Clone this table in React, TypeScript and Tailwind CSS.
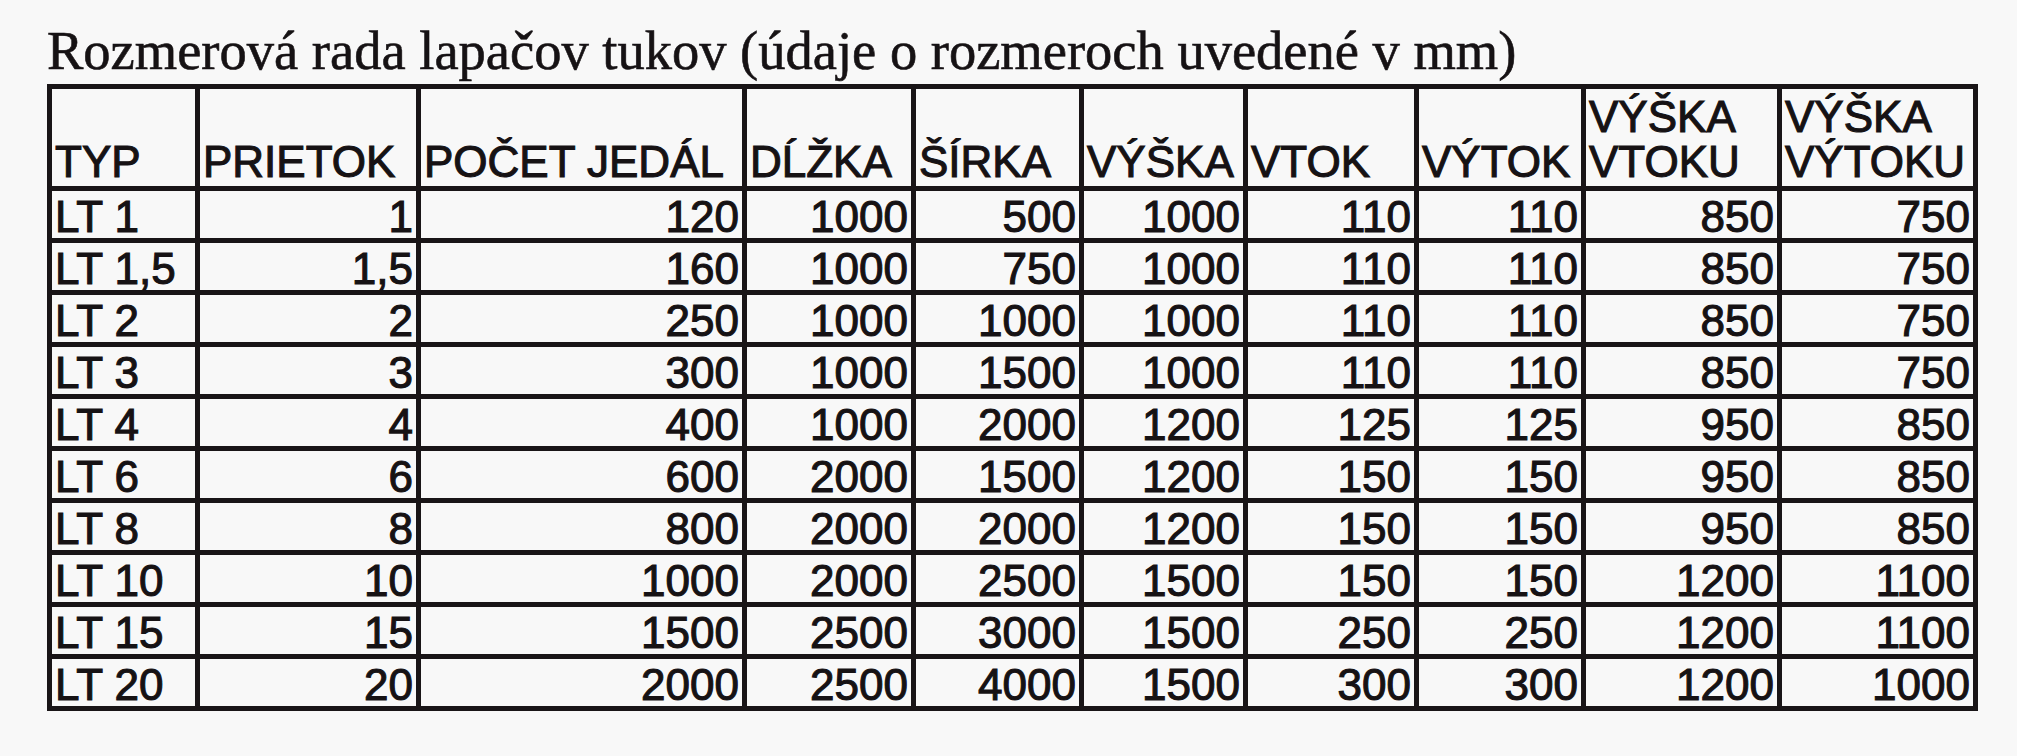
const rows: string[][] = [
  ["LT 1", "1", "120", "1000", "500", "1000", "110", "110", "850", "750"],
  ["LT 1,5", "1,5", "160", "1000", "750", "1000", "110", "110", "850", "750"],
  ["LT 2", "2", "250", "1000", "1000", "1000", "110", "110", "850", "750"],
  ["LT 3", "3", "300", "1000", "1500", "1000", "110", "110", "850", "750"],
  ["LT 4", "4", "400", "1000", "2000", "1200", "125", "125", "950", "850"],
  ["LT 6", "6", "600", "2000", "1500", "1200", "150", "150", "950", "850"],
  ["LT 8", "8", "800", "2000", "2000", "1200", "150", "150", "950", "850"],
  ["LT 10", "10", "1000", "2000", "2500", "1500", "150", "150", "1200", "1100"],
  ["LT 15", "15", "1500", "2500", "3000", "1500", "250", "250", "1200", "1100"],
  ["LT 20", "20", "2000", "2500", "4000", "1500", "300", "300", "1200", "1000"],
];

const headers: string[][] = [
  ["TYP"],
  ["PRIETOK"],
  ["POČET JEDÁL"],
  ["DĹŽKA"],
  ["ŠÍRKA"],
  ["VÝŠKA"],
  ["VTOK"],
  ["VÝTOK"],
  ["VÝŠKA", "VTOKU"],
  ["VÝŠKA", "VÝTOKU"],
];

const cell = "border-[5px] border-[#191517] px-[3px] align-bottom";

export default function App() {
  return (
    <div className="min-h-screen w-[2017px] bg-[#f8f8f8] pl-[47px] pt-[18px] text-[#161214]">
      <h1 className="font-['Liberation_Serif','Times_New_Roman',serif] text-[54.5px] leading-[66px] [-webkit-text-stroke:0.6px_#161214]">
        Rozmerová rada lapačov tukov (údaje o rozmeroch uvedené v mm)
      </h1>

      <table className="table-fixed border-collapse font-['Liberation_Sans',Arial,sans-serif] text-[44px] leading-[40px] [-webkit-text-stroke:1.1px_#161214]">
        <colgroup>
          <col className="w-[148px]" />
          <col className="w-[221px]" />
          <col className="w-[326px]" />
          <col className="w-[169px]" />
          <col className="w-[168px]" />
          <col className="w-[164px]" />
          <col className="w-[171px]" />
          <col className="w-[167px]" />
          <col className="w-[196px]" />
          <col className="w-[196px]" />
        </colgroup>
        <thead>
          <tr className="h-[102px]">
            {headers.map((h, i) => (
              <th key={i} className={`${cell} pb-[2px] text-left font-normal`}>
                {h.map((line, j) => (
                  <div key={j} className="whitespace-nowrap leading-[45px]">
                    {line}
                  </div>
                ))}
              </th>
            ))}
          </tr>
        </thead>
        <tbody>
          {rows.map((r) => (
            <tr key={r[0]} className="h-[52px]">
              {r.map((v, i) => (
                <td
                  key={i}
                  className={`${cell} whitespace-nowrap pb-[1px] ${i === 0 ? "text-left" : "text-right"}`}
                >
                  {v}
                </td>
              ))}
            </tr>
          ))}
        </tbody>
      </table>
    </div>
  );
}
